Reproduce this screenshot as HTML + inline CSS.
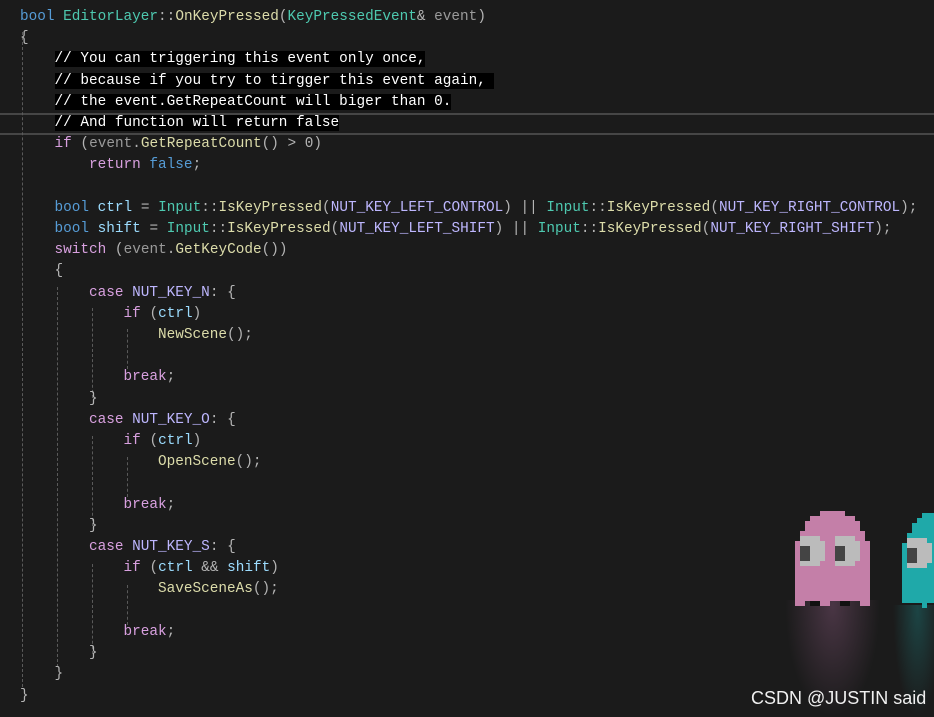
<!DOCTYPE html>
<html><head><meta charset="utf-8"><style>
html,body{margin:0;padding:0;background:#1b1b1b;width:934px;height:717px;overflow:hidden;position:relative}
pre{position:absolute;left:20px;top:7px;margin:0;font-family:"Liberation Mono","Noto Sans CJK SC",monospace;font-size:14.38px;line-height:21.2px;color:#dcdcdc;white-space:pre}
.k{color:#569cd6}.t{color:#4ec9b0}.f{color:#dcdcaa}.p{color:#9a9a9a}.c{color:#fff;background:#000}
.m{color:#beb7ff}.v{color:#9cdcfe}.r{color:#d8a0df}.o{color:#b4b4b4}
.hl{position:absolute;left:0;width:934px;height:2px;background:#464646}
.g{position:absolute;width:0;border-left:1px dashed #5a5a5a}
.px{position:absolute}
.wm{position:absolute;left:751px;top:688px;font-family:"Liberation Sans",sans-serif;font-size:18px;color:#f0f0f0}
</style></head><body>
<div class="hl" style="top:113px"></div>
<div class="hl" style="top:133px"></div>
<div class="g" style="left:22px;top:32px;height:655px"></div>
<div class="g" style="left:57px;top:287px;height:380px"></div>
<div class="g" style="left:92px;top:308px;height:90px"></div>
<div class="g" style="left:92px;top:436px;height:90px"></div>
<div class="g" style="left:92px;top:564px;height:90px"></div>
<div class="g" style="left:127px;top:329px;height:40px"></div>
<div class="g" style="left:127px;top:457px;height:40px"></div>
<div class="g" style="left:127px;top:585px;height:40px"></div>
<div class="px" style="left:785px;top:600px;width:95px;height:117px;background:radial-gradient(ellipse at 50% 5%,rgba(120,80,110,.5),rgba(0,0,0,0) 70%)"></div>
<div class="px" style="left:893px;top:605px;width:41px;height:112px;background:radial-gradient(ellipse at 60% 5%,rgba(30,110,110,.5),rgba(0,0,0,0) 70%)"></div>
<svg class="px" style="left:795px;top:511px" width="75" height="100" viewBox="0 0 15 20" shape-rendering="crispEdges">
<path fill="#c47fa8" d="M5 0h5v1h2v1h1v2h1v2h1v13h-2v-1h-2v1h-2v-1h-2v1h-2v-1H2v1H0V6h1V4h1V2h1V1h2z"/>
<path fill="#111" d="M3 18h2v1H3zM9 18h2v1H9z"/>
<path fill="#bbb" d="M1 5h4v1h1v4h-1v1H1zM8 5h4v1h1v4h-1v1H8z"/>
<path fill="#444" d="M1 7h2v3H1zM8 7h2v3H8z"/>
</svg>
<svg class="px" style="left:902px;top:513px" width="40" height="100" viewBox="0 0 8 20" shape-rendering="crispEdges">
<path fill="#1fa9a9" d="M4 0h4v19h-1v-1h-2v1h-1v-1H0V6h1V4h1V2h1V1h1z"/>
<path fill="#bbb" d="M1 5h4v1h1v4h-1v1H1z"/>
<path fill="#444" d="M1 7h2v3H1z"/>
</svg>
<pre><span class="k">bool</span> <span class="t">EditorLayer</span><span class="o">::</span><span class="f">OnKeyPressed</span><span class="o">(</span><span class="t">KeyPressedEvent</span><span class="o">&amp;</span> <span class="p">event</span><span class="o">)</span>
<span class="o">{</span>
    <span class="c">// You can triggering this event only once,</span>
    <span class="c">// because if you try to tirgger this event again, </span>
    <span class="c">// the event.GetRepeatCount will biger than 0.</span>
    <span class="c">// And function will return false</span>
    <span class="r">if</span> <span class="o">(</span><span class="p">event</span><span class="o">.</span><span class="f">GetRepeatCount</span><span class="o">() &gt; 0)</span>
        <span class="r">return</span> <span class="k">false</span><span class="o">;</span>

    <span class="k">bool</span> <span class="v">ctrl</span> <span class="o">=</span> <span class="t">Input</span><span class="o">::</span><span class="f">IsKeyPressed</span><span class="o">(</span><span class="m">NUT_KEY_LEFT_CONTROL</span><span class="o">) ||</span> <span class="t">Input</span><span class="o">::</span><span class="f">IsKeyPressed</span><span class="o">(</span><span class="m">NUT_KEY_RIGHT_CONTROL</span><span class="o">);</span>
    <span class="k">bool</span> <span class="v">shift</span> <span class="o">=</span> <span class="t">Input</span><span class="o">::</span><span class="f">IsKeyPressed</span><span class="o">(</span><span class="m">NUT_KEY_LEFT_SHIFT</span><span class="o">) ||</span> <span class="t">Input</span><span class="o">::</span><span class="f">IsKeyPressed</span><span class="o">(</span><span class="m">NUT_KEY_RIGHT_SHIFT</span><span class="o">);</span>
    <span class="r">switch</span> <span class="o">(</span><span class="p">event</span><span class="o">.</span><span class="f">GetKeyCode</span><span class="o">())</span>
    <span class="o">{</span>
        <span class="r">case</span> <span class="m">NUT_KEY_N</span><span class="o">: {</span>
            <span class="r">if</span> <span class="o">(</span><span class="v">ctrl</span><span class="o">)</span>
                <span class="f">NewScene</span><span class="o">();</span>

            <span class="r">break</span><span class="o">;</span>
        <span class="o">}</span>
        <span class="r">case</span> <span class="m">NUT_KEY_O</span><span class="o">: {</span>
            <span class="r">if</span> <span class="o">(</span><span class="v">ctrl</span><span class="o">)</span>
                <span class="f">OpenScene</span><span class="o">();</span>

            <span class="r">break</span><span class="o">;</span>
        <span class="o">}</span>
        <span class="r">case</span> <span class="m">NUT_KEY_S</span><span class="o">: {</span>
            <span class="r">if</span> <span class="o">(</span><span class="v">ctrl</span> <span class="o">&amp;&amp;</span> <span class="v">shift</span><span class="o">)</span>
                <span class="f">SaveSceneAs</span><span class="o">();</span>

            <span class="r">break</span><span class="o">;</span>
        <span class="o">}</span>
    <span class="o">}</span>
<span class="o">}</span></pre>
<div class="wm">CSDN @JUSTIN said</div>
</body></html>
